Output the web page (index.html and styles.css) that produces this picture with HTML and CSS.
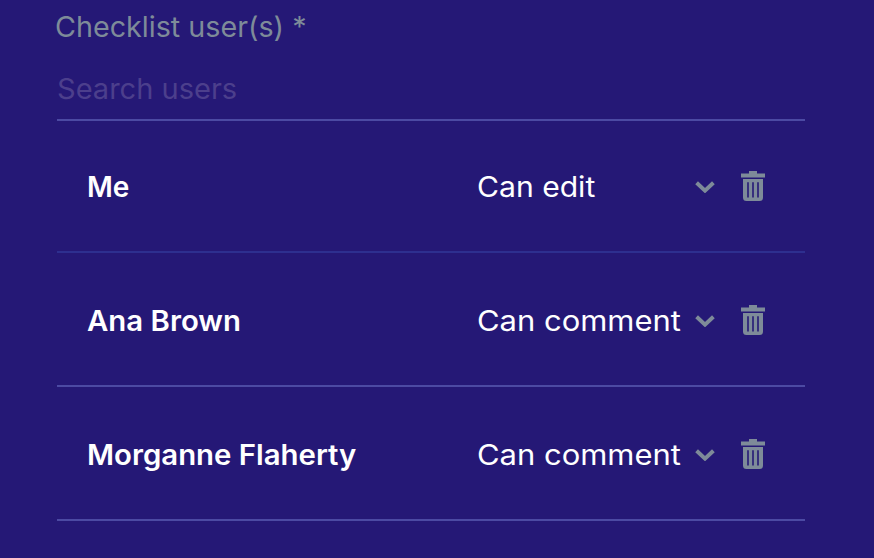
FILE: index.html
```
<!DOCTYPE html>
<html lang="en">
<head>
<meta charset="utf-8">
<title>Checklist users</title>
<link rel="stylesheet" href="styles.css">
</head>
<body>
<svg class="defs" aria-hidden="true">
  <symbol id="chevron" viewBox="0 0 20 12"><path d="M1.6 1.8 10 9.6 18.4 1.8" fill="none" stroke="currentColor" stroke-width="4"/></symbol>
  <symbol id="trash" viewBox="0 0 24 30"><path fill="currentColor" fill-rule="evenodd" d="M8 0H16V2.500H24V6.500H0V2.500H8ZM2 8H22V26.500Q22 30 18.500 30H5.500Q2 30 2 26.500ZM6.200 11.300V26.500H7.800V11.300ZM11.200 11.300V26.500H12.800V11.300ZM16.200 11.300V26.500H17.800V11.300Z"/></symbol>
</svg>
<main class="panel">
  <label class="label"><span class="text t-label">Checklist user(s) *</span></label>
  <div class="search"><span class="text t-search">Search users</span></div>
  <ul class="users">
    <li class="user user--self">
      <span class="name"><span class="text">Me</span></span>
      <span class="role"><span class="text t-edit">Can edit</span></span>
      <svg class="chevron"><use href="#chevron"/></svg>
      <svg class="trash"><use href="#trash"/></svg>
    </li>
    <li class="user">
      <span class="name"><span class="text t-name">Ana Brown</span></span>
      <span class="role"><span class="text t-comment">Can comment</span></span>
      <svg class="chevron"><use href="#chevron"/></svg>
      <svg class="trash"><use href="#trash"/></svg>
    </li>
    <li class="user">
      <span class="name"><span class="text t-name">Morganne Flaherty</span></span>
      <span class="role"><span class="text t-comment">Can comment</span></span>
      <svg class="chevron"><use href="#chevron"/></svg>
      <svg class="trash"><use href="#trash"/></svg>
    </li>
  </ul>
</main>
</body>
</html>
```
FILE: styles.css
```
* { box-sizing: border-box; }
body {
  margin: 0;
  height: 558px;
  overflow: hidden;
  background: #251876;
  color: #fff;
  font: 400 28px/40px Inter, "Liberation Sans", sans-serif;
  white-space: nowrap;
}
.defs { position: absolute; width: 0; height: 0; }
.panel { width: 748px; margin-left: 57px; padding-top: 7px; }
.text { display: inline-block; transform-origin: 0 50%; }
.t-label { transform: scaleX(1.025); }
.t-search { transform: scaleX(1.037); }
.t-edit { transform: scaleX(1.075); }
.t-comment { transform: scaleX(1.105); }
.t-name { transform: scaleX(1.048); }
.label { display: block; margin-left: -2px; height: 40px; color: #7e8b99; }
.search {
  height: 74px;
  padding-top: 22px;
  border-bottom: 2px solid #4c4aa3;
  color: #4c3f8c;
}
.users { margin: 0; padding: 0; list-style: none; }
.user {
  display: grid;
  grid-template-columns: 390px 218px 20px 24px;
  align-items: center;
  height: 134px;
  padding: 2px 0 0 30px;
  border-bottom: 2px solid #4c4aa3;
}
.user--self { height: 132px; padding-top: 0; border-color: #2e2f8f; }
.name, .role { padding-top: 2px; }
.name { font-weight: 600; }
.chevron { width: 20px; height: 12px; margin-top: 2px; color: #7e8b99; }
.trash { width: 24px; height: 30px; margin-left: 26px; color: #7e8b99; }
```
